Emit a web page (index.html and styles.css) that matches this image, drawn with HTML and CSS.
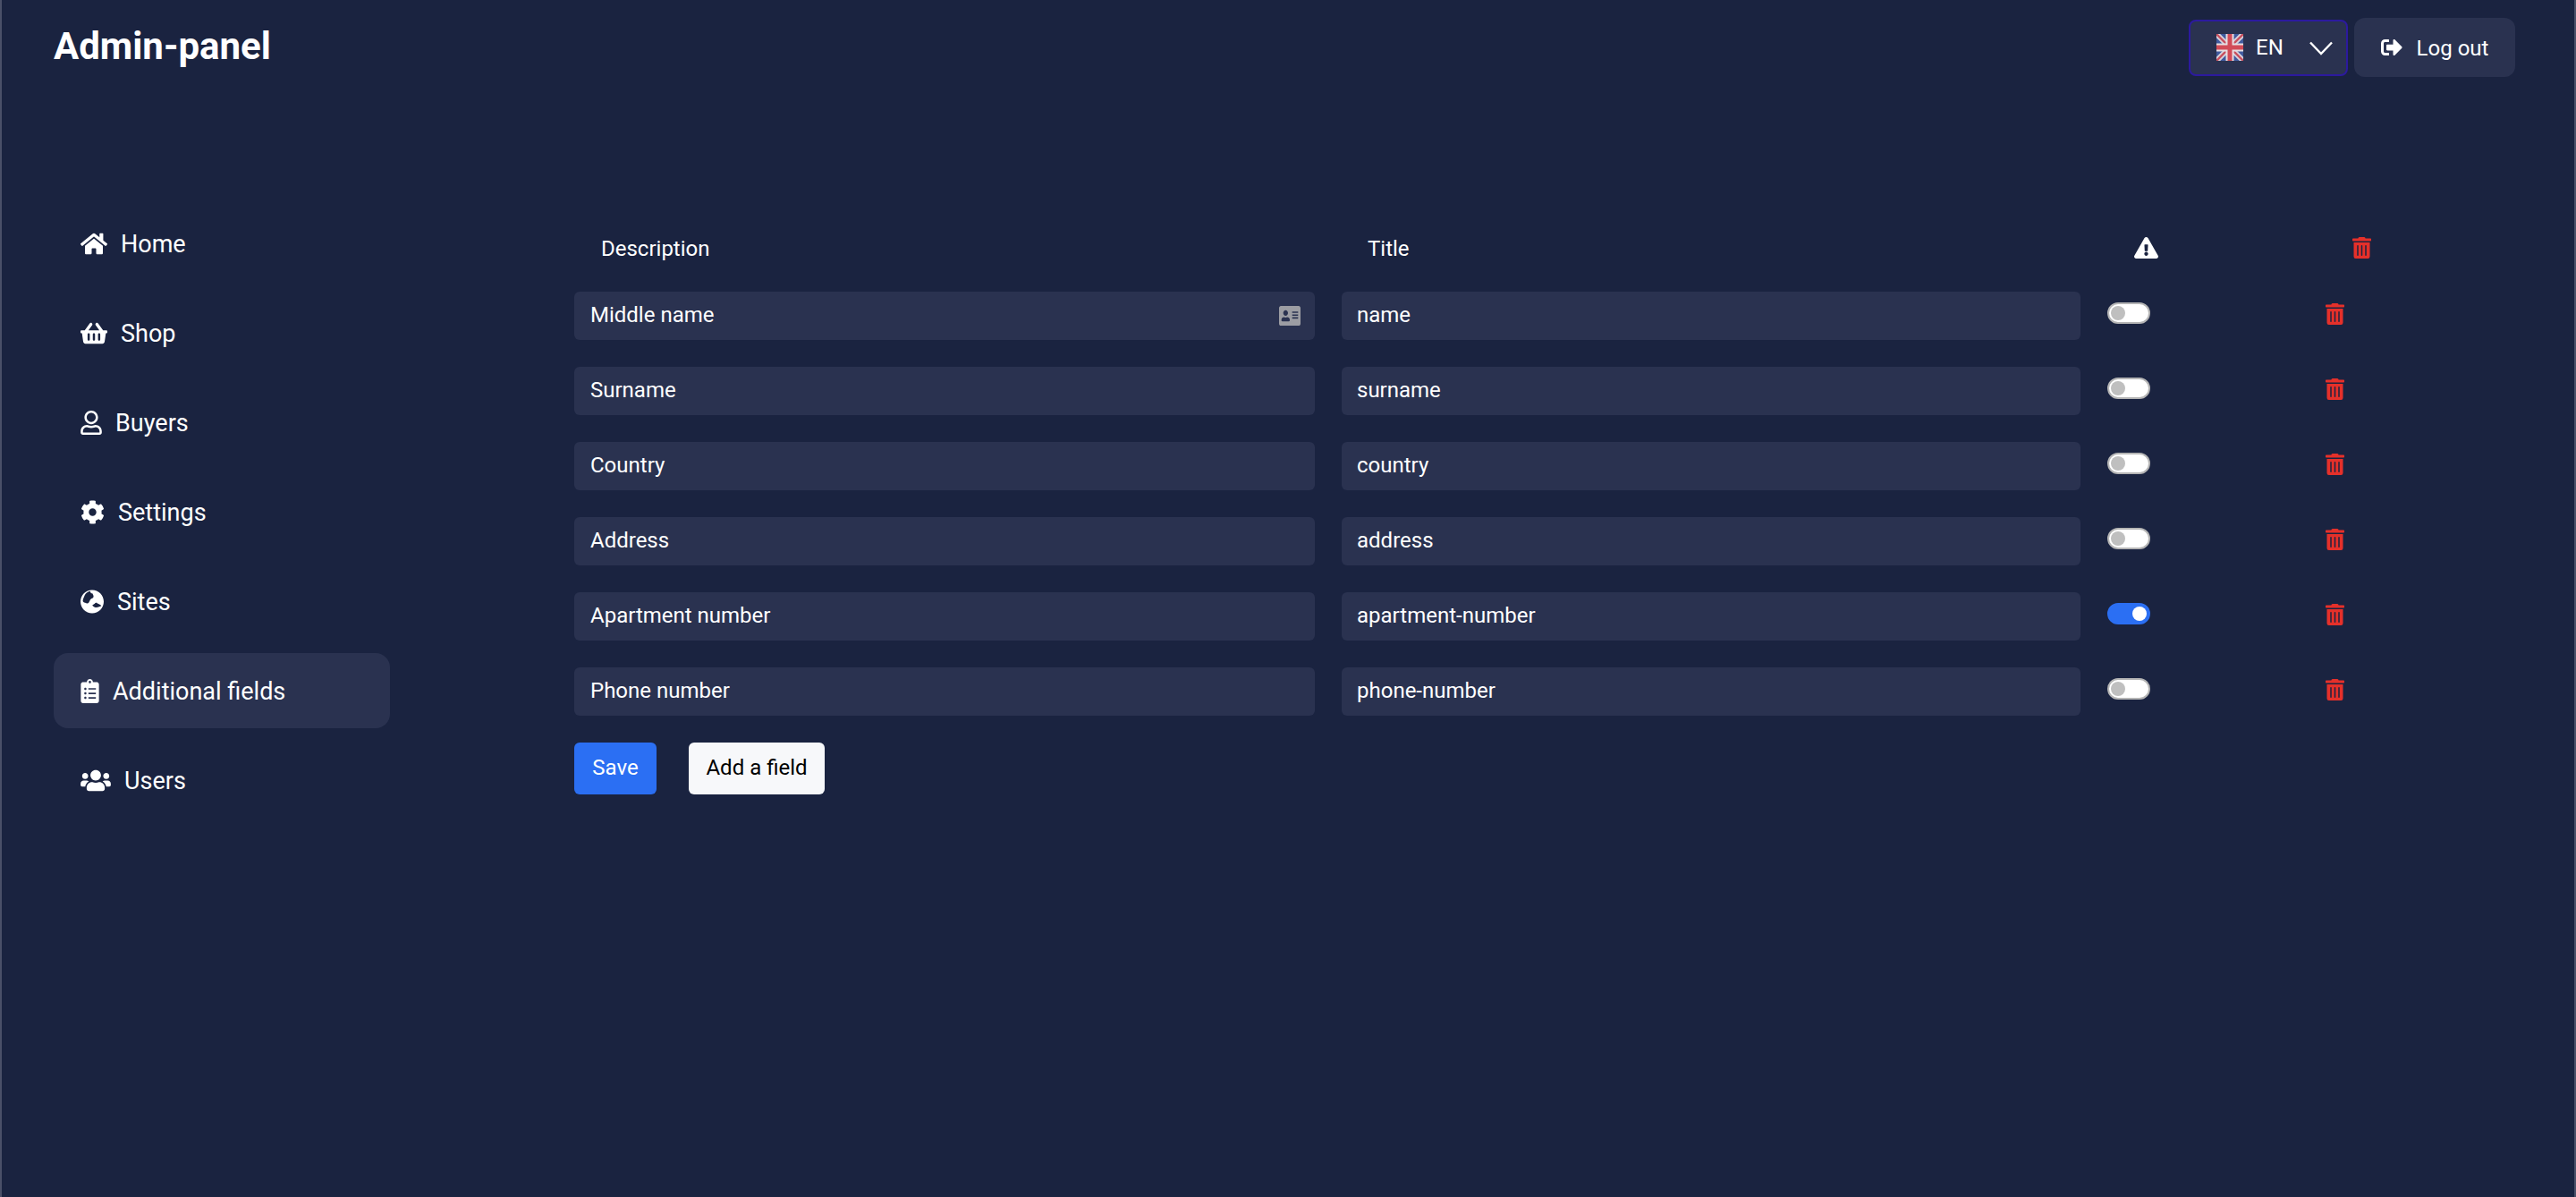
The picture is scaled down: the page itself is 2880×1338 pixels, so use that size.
FILE: index.html
```html
<!DOCTYPE html>
<html lang="en">
<head>
<meta charset="utf-8">
<title>Admin-panel</title>
<link rel="stylesheet" href="styles.css">
</head>
<body>
<svg class="sprites" xmlns="http://www.w3.org/2000/svg">
  <symbol id="i-home" viewBox="0 0 576 512"><path d="M280.37 148.26L96 300.11V464a16 16 0 0 0 16 16l112.06-.29a16 16 0 0 0 15.92-16V368a16 16 0 0 1 16-16h64a16 16 0 0 1 16 16v95.64a16 16 0 0 0 16 16.05L464 480a16 16 0 0 0 16-16V300L295.67 148.26a12.19 12.19 0 0 0-15.3 0zM571.6 251.47L488 182.56V44.05a12 12 0 0 0-12-12h-56a12 12 0 0 0-12 12v72.61L318.47 43a48 48 0 0 0-61 0L4.34 251.47a12 12 0 0 0-1.6 16.9l25.5 31A12 12 0 0 0 45.15 301l235.22-193.74a12.19 12.19 0 0 1 15.3 0L530.9 301a12 12 0 0 0 16.9-1.6l25.5-31a12 12 0 0 0-1.7-16.93z"/></symbol>
  <symbol id="i-basket" viewBox="0 0 576 512"><path d="M576 216v16c0 13.255-10.745 24-24 24h-8l-26.113 182.788C514.509 462.435 494.257 480 470.37 480H105.63c-23.887 0-44.139-17.565-47.518-41.212L32 256h-8c-13.255 0-24-10.745-24-24v-16c0-13.255 10.745-24 24-24h67.341l106.78-146.821c10.395-14.292 30.407-17.453 44.701-7.058 14.293 10.395 17.453 30.408 7.058 44.701L170.477 192h235.046L326.12 82.821c-10.395-14.292-7.234-34.306 7.059-44.701 14.291-10.395 34.306-7.235 44.701 7.058L484.659 192H552c13.255 0 24 10.745 24 24zM312 392V280c0-13.255-10.745-24-24-24s-24 10.745-24 24v112c0 13.255 10.745 24 24 24s24-10.745 24-24zm112 0V280c0-13.255-10.745-24-24-24s-24 10.745-24 24v112c0 13.255 10.745 24 24 24s24-10.745 24-24zm-224 0V280c0-13.255-10.745-24-24-24s-24 10.745-24 24v112c0 13.255 10.745 24 24 24s24-10.745 24-24z"/></symbol>
  <symbol id="i-user" viewBox="0 0 448 512"><path d="M313.6 304c-28.7 0-42.5 16-89.6 16-47.1 0-60.8-16-89.6-16C60.2 304 0 364.2 0 438.4V464c0 26.5 21.5 48 48 48h352c26.5 0 48-21.5 48-48v-25.6c0-74.2-60.2-134.4-134.4-134.4zM400 464H48v-25.6c0-47.6 38.8-86.4 86.4-86.4 14.6 0 38.3 16 89.6 16 51.7 0 74.9-16 89.6-16 47.6 0 86.4 38.8 86.4 86.4V464zM224 288c79.5 0 144-64.5 144-144S303.5 0 224 0 80 64.5 80 144s64.5 144 144 144zm0-240c52.9 0 96 43.1 96 96s-43.1 96-96 96-96-43.1-96-96 43.1-96 96-96z"/></symbol>
  <symbol id="i-cog" viewBox="0 0 512 512"><path d="M487.4 315.7l-42.6-24.6c4.3-23.2 4.3-47 0-70.2l42.6-24.6c4.9-2.8 7.1-8.6 5.5-14-11.1-35.6-30-67.8-54.7-94.6-3.8-4.1-10-5.1-14.8-2.3L380.8 110c-17.9-15.4-38.5-27.3-60.8-35.1V25.8c0-5.6-3.9-10.5-9.4-11.7-36.7-8.2-74.3-7.8-109.2 0-5.5 1.2-9.4 6.1-9.4 11.7V75c-22.2 7.9-42.8 19.8-60.8 35.1L88.7 85.5c-4.9-2.8-11-1.9-14.8 2.3-24.7 26.7-43.6 58.9-54.7 94.6-1.7 5.4.6 11.2 5.5 14L67.3 221c-4.3 23.2-4.3 47 0 70.2l-42.6 24.6c-4.9 2.8-7.1 8.6-5.5 14 11.1 35.6 30 67.8 54.7 94.6 3.8 4.1 10 5.1 14.8 2.3l42.6-24.6c17.9 15.4 38.5 27.3 60.8 35.1v49.2c0 5.6 3.9 10.5 9.4 11.7 36.7 8.2 74.3 7.8 109.2 0 5.5-1.2 9.4-6.1 9.4-11.7v-49.2c22.2-7.9 42.8-19.8 60.8-35.1l42.6 24.6c4.9 2.8 11 1.9 14.8-2.3 24.7-26.7 43.6-58.9 54.7-94.6 1.5-5.5-.7-11.3-5.6-14.1zM256 336c-44.1 0-80-35.9-80-80s35.9-80 80-80 80 35.9 80 80-35.9 80-80 80z"/></symbol>
  <symbol id="i-globe" viewBox="0 0 496 512"><path fill-rule="evenodd" d="M248 8C111 8 0 119 0 256s111 248 248 248 248-111 248-248S385 8 248 8zM203 30c-50 14-94 44-112 86-18 40-44 90-41 132 14 30 36 34 50 32 16 8 44 20 60 10 24-12 30-44 42-64 8-20 24-24 34-36 22-8 44-20 42-50-2-24-16-42-25-60-16 4-34-2-50-50zM254 332c6 20 30 34 48 42 30 12 64 6 96-6 16-6 34-14 47-22-12-20-36-36-62-44-10-8-34-8-33-22-20-4-42 6-50 22-14 8-34 14-46 30z"/></symbol>
  <symbol id="i-clipboard" viewBox="0 0 384 512"><path d="M336 64h-80c0-35.3-28.7-64-64-64s-64 28.7-64 64H48C21.5 64 0 85.5 0 112v352c0 26.5 21.5 48 48 48h288c26.5 0 48-21.5 48-48V112c0-26.5-21.5-48-48-48zM96 424c-13.3 0-24-10.7-24-24s10.7-24 24-24 24 10.7 24 24-10.7 24-24 24zm0-96c-13.3 0-24-10.7-24-24s10.7-24 24-24 24 10.7 24 24-10.7 24-24 24zm0-96c-13.3 0-24-10.7-24-24s10.7-24 24-24 24 10.7 24 24-10.7 24-24 24zm96-192c13.3 0 24 10.7 24 24s-10.7 24-24 24-24-10.7-24-24 10.7-24 24-24zm128 368c0 4.4-3.6 8-8 8H168c-4.4 0-8-3.6-8-8v-16c0-4.4 3.6-8 8-8h144c4.4 0 8 3.6 8 8v16zm0-96c0 4.4-3.6 8-8 8H168c-4.4 0-8-3.6-8-8v-16c0-4.4 3.6-8 8-8h144c4.4 0 8 3.6 8 8v16zm0-96c0 4.4-3.6 8-8 8H168c-4.4 0-8-3.6-8-8v-16c0-4.4 3.6-8 8-8h144c4.4 0 8 3.6 8 8v16z"/></symbol>
  <symbol id="i-users" viewBox="0 0 640 512"><path d="M96 224c35.3 0 64-28.7 64-64s-28.7-64-64-64-64 28.7-64 64 28.7 64 64 64zm448 0c35.3 0 64-28.7 64-64s-28.7-64-64-64-64 28.7-64 64 28.7 64 64 64zm32 32h-64c-17.6 0-33.5 7.1-45.1 18.6 40.3 22.1 68.9 62 75.1 109.4h66c17.7 0 32-14.3 32-32v-32c0-35.3-28.7-64-64-64zm-256 0c61.9 0 112-50.1 112-112S381.9 32 320 32 208 82.1 208 144s50.1 112 112 112zm76.8 32h-8.3c-20.8 10-43.9 16-68.5 16s-47.6-6-68.5-16h-8.3C179.6 288 128 339.6 128 403.2V432c0 26.5 21.5 48 48 48h288c26.5 0 48-21.5 48-48v-28.8c0-63.6-51.6-115.2-115.2-115.2zm-223.7-13.4C161.5 263.1 145.6 256 128 256H64c-35.3 0-64 28.7-64 64v32c0 17.7 14.3 32 32 32h65.9c6.3-47.4 34.9-87.3 75.2-109.4z"/></symbol>
  <symbol id="i-signout" viewBox="0 0 512 512"><path d="M497 273L329 441c-15 15-41 4.5-41-17v-96H152c-13.3 0-24-10.7-24-24v-96c0-13.3 10.7-24 24-24h136V88c0-21.4 25.9-32 41-17l168 168c9.3 9.4 9.3 24.6 0 34zM192 436v-40c0-6.6-5.4-12-12-12H96c-17.7 0-32-14.3-32-32V160c0-17.7 14.3-32 32-32h84c6.6 0 12-5.4 12-12V76c0-6.6-5.4-12-12-12H96c-53 0-96 43-96 96v192c0 53 43 96 96 96h84c6.6 0 12-5.4 12-12z"/></symbol>
  <symbol id="i-trash" viewBox="0 0 448 512"><path d="M32 464a48 48 0 0 0 48 48h288a48 48 0 0 0 48-48V128H32zm272-256a16 16 0 0 1 32 0v224a16 16 0 0 1-32 0zm-96 0a16 16 0 0 1 32 0v224a16 16 0 0 1-32 0zm-96 0a16 16 0 0 1 32 0v224a16 16 0 0 1-32 0zM432 32H312l-9.4-18.7A24 24 0 0 0 281.1 0H166.8a23.72 23.72 0 0 0-21.4 13.3L136 32H16A16 16 0 0 0 0 48v32a16 16 0 0 0 16 16h416a16 16 0 0 0 16-16V48a16 16 0 0 0-16-16z"/></symbol>
  <symbol id="i-warn" viewBox="0 0 576 512"><path d="M569.517 440.013C587.975 472.007 564.806 512 527.94 512H48.054c-36.937 0-59.999-40.055-41.577-71.987L246.423 23.985c18.467-32.009 64.72-31.951 83.154 0l239.94 416.028zM288 354c-25.405 0-46 20.595-46 46s20.595 46 46 46 46-20.595 46-46-20.595-46-46-46zm-43.673-165.346l7.418 136c.347 6.364 5.609 11.346 11.982 11.346h48.546c6.373 0 11.635-4.982 11.982-11.346l7.418-136c.375-6.874-5.098-12.654-11.982-12.654h-63.383c-6.884 0-12.356 5.78-11.981 12.654z"/></symbol>
  <symbol id="i-card" viewBox="0 32 576 448" preserveAspectRatio="none"><path d="M528 32H48C21.5 32 0 53.5 0 80v352c0 26.5 21.5 48 48 48h480c26.5 0 48-21.5 48-48V80c0-26.5-21.5-48-48-48zm-352 96c35.3 0 64 28.7 64 64s-28.7 64-64 64-64-28.7-64-64 28.7-64 64-64zm112 236.8c0 10.6-10 19.2-22.4 19.2H86.4C74 384 64 375.4 64 364.8v-19.2c0-31.8 30.1-57.6 67.2-57.6h5c12.3 5.1 25.7 8 39.8 8s27.6-2.9 39.8-8h5c37.1 0 67.2 25.8 67.2 57.6v19.2zM512 312c0 4.4-3.6 8-8 8H360c-4.4 0-8-3.6-8-8v-16c0-4.4 3.6-8 8-8h144c4.4 0 8 3.6 8 8v16zm0-64c0 4.4-3.6 8-8 8H360c-4.4 0-8-3.6-8-8v-16c0-4.4 3.6-8 8-8h144c4.4 0 8 3.6 8 8v16zm0-64c0 4.4-3.6 8-8 8H360c-4.4 0-8-3.6-8-8v-16c0-4.4 3.6-8 8-8h144c4.4 0 8 3.6 8 8v16z"/></symbol>
</svg>

<header class="topbar">
  <h1 class="brand">Admin-panel</h1>
  <div class="top-actions">
    <div class="lang">
      <svg class="flag" viewBox="0 0 30 30" xmlns="http://www.w3.org/2000/svg">
        <g class="flag-art">
          <rect x="-3" y="-3" width="36" height="36" fill="#3f5a9e"/>
          <path d="M-3 -3L33 33M33 -3L-3 33" stroke="#d9d4dc" stroke-width="6"/>
          <path d="M-3 -3L33 33M33 -3L-3 33" stroke="#c8505f" stroke-width="2.4"/>
          <path d="M15 -3V33M-3 15H33" stroke="#e6dfe2" stroke-width="9"/>
          <path d="M15 -3V33M-3 15H33" stroke="#d24c58" stroke-width="5"/>
        </g>
      </svg>
      <span class="lang-code">EN</span>
      <svg class="chevron" viewBox="0 0 26 16" xmlns="http://www.w3.org/2000/svg"><path d="M1 1.5L13 14L25 1.5" fill="none" stroke="#fff" stroke-width="2.4"/></svg>
    </div>
    <button class="logout"><svg class="ico ico-logout"><use href="#i-signout"/></svg><span class="logout-label">Log out</span></button>
  </div>
</header>

<div class="layout">
  <nav class="side">
    <a class="side-item"><svg class="ico w-home"><use href="#i-home"/></svg><span>Home</span></a>
    <a class="side-item"><svg class="ico w-home"><use href="#i-basket"/></svg><span>Shop</span></a>
    <a class="side-item"><svg class="ico w-user"><use href="#i-user"/></svg><span>Buyers</span></a>
    <a class="side-item"><svg class="ico w-cog"><use href="#i-cog"/></svg><span>Settings</span></a>
    <a class="side-item"><svg class="ico w-globe"><use href="#i-globe"/></svg><span>Sites</span></a>
    <a class="side-item is-active"><svg class="ico w-clip"><use href="#i-clipboard"/></svg><span>Additional fields</span></a>
    <a class="side-item"><svg class="ico w-users"><use href="#i-users"/></svg><span>Users</span></a>
  </nav>

  <main class="content">
    <div class="grid head">
      <div class="head-cell"><span class="head-label">Description</span></div>
      <div class="head-cell"><span class="head-label">Title</span></div>
      <div class="head-cell"><svg class="warn"><use href="#i-warn"/></svg></div>
      <div class="head-cell"><svg class="trash"><use href="#i-trash"/></svg></div>
    </div>
    <div class="rows">
      <div class="grid">
        <div class="field"><span>Middle name</span><svg class="card"><use href="#i-card"/></svg></div>
        <div class="field field-title"><span>name</span></div>
        <div class="cell"><span class="toggle"></span></div>
        <div class="cell cell-trash"><svg class="trash"><use href="#i-trash"/></svg></div>
      </div>
      <div class="grid">
        <div class="field"><span>Surname</span></div>
        <div class="field field-title"><span>surname</span></div>
        <div class="cell"><span class="toggle"></span></div>
        <div class="cell cell-trash"><svg class="trash"><use href="#i-trash"/></svg></div>
      </div>
      <div class="grid">
        <div class="field"><span>Country</span></div>
        <div class="field field-title"><span>country</span></div>
        <div class="cell"><span class="toggle"></span></div>
        <div class="cell cell-trash"><svg class="trash"><use href="#i-trash"/></svg></div>
      </div>
      <div class="grid">
        <div class="field"><span>Address</span></div>
        <div class="field field-title"><span>address</span></div>
        <div class="cell"><span class="toggle"></span></div>
        <div class="cell cell-trash"><svg class="trash"><use href="#i-trash"/></svg></div>
      </div>
      <div class="grid">
        <div class="field"><span>Apartment number</span></div>
        <div class="field field-title"><span>apartment-number</span></div>
        <div class="cell"><span class="toggle is-on"></span></div>
        <div class="cell cell-trash"><svg class="trash"><use href="#i-trash"/></svg></div>
      </div>
      <div class="grid">
        <div class="field"><span>Phone number</span></div>
        <div class="field field-title"><span>phone-number</span></div>
        <div class="cell"><span class="toggle"></span></div>
        <div class="cell cell-trash"><svg class="trash"><use href="#i-trash"/></svg></div>
      </div>
      <div class="actions">
        <button class="btn btn-save">Save</button>
        <button class="btn btn-add">Add a field</button>
      </div>
    </div>
  </main>
</div>
</body>
</html>
```

FILE: styles.css
```css
* { box-sizing: border-box; }
html, body { margin: 0; height: 100%; }
body {
  background: #1a2340;
  border-left: 2px solid #4a5068;
  border-right: 2px solid #4a5068;
  color: #fff;
  font-family: Roboto, "Liberation Sans", sans-serif;
  overflow: hidden;
}
.sprites { display: none; }
svg { fill: currentColor; flex: none; display: block; }

.topbar {
  height: 130px;
  padding: 20px 66px 0 58px;
  display: flex;
  justify-content: space-between;
  align-items: flex-start;
}
.brand {
  margin: 10px 0 0;
  font-size: 42px;
  line-height: 44px;
  font-weight: 700;
}
.top-actions { display: flex; align-items: center; gap: 7px; }
.lang {
  width: 178px;
  height: 63px;
  border: 2px solid #2c1a9e;
  border-radius: 8px;
  background: #2a3250;
  display: flex;
  align-items: center;
  padding-left: 29px;
  font-size: 24px;
}
.flag { width: 30px; height: 30px; }
.flag-art { filter: blur(.7px); }
.lang-code { margin-left: 14px; }
.chevron { width: 26px; height: 16px; margin: 2px 15px 0 auto; }
.logout {
  width: 180px;
  height: 66px;
  border: 0;
  border-radius: 12px;
  background: #2a3250;
  color: #fff;
  font: 400 24px Roboto, sans-serif;
  display: flex;
  align-items: center;
  justify-content: center;
  gap: 16px;
  padding: 0;
}
.logout-label { padding-top: 1px; }

.layout { display: flex; align-items: flex-start; padding-top: 100px; }
.side { width: 376px; margin-left: 58px; display: flex; flex-direction: column; gap: 16px; }
.side-item {
  height: 84px;
  padding: 0 30px;
  border-radius: 16px;
  display: flex;
  align-items: center;
  gap: 15px;
  font-size: 27px;
}
.side-item span { padding-top: 1px; }
.is-active { background: #2a3250; }
.ico { height: 27px; }
.w-home { width: 30px; }
.w-user { width: 24px; }
.w-cog { width: 27px; }
.w-globe { width: 26px; }
.w-clip { width: 21px; }
.w-users { width: 34px; }
.logout .ico { width: 24px; height: 24px; }

.content { margin-left: 206px; margin-top: 20px; }
.grid {
  display: grid;
  grid-template-columns: 828px 826px 214px 24px;
  column-gap: 30px;
}
.head { height: 54px; font-size: 24px; align-items: center; }
.head-cell { padding-left: 30px; }
.head-label { display: block; padding-top: 1px; }
.head-cell:nth-child(2) .head-label { margin-left: -1px; }
.rows { margin-top: 22px; display: flex; flex-direction: column; gap: 30px; }
.field {
  height: 54px;
  padding: 0 18px 2px;
  border-radius: 6px;
  background: #2a3250;
  display: flex;
  align-items: center;
  justify-content: space-between;
  font-size: 24px;
}
.field-title { padding-left: 17px; }
.card { width: 24px; height: 22px; color: #9c9da3; margin-right: -2px; margin-top: 2px; }
.cell { padding-top: 12px; }
.cell-trash { padding-top: 13px; }
.warn { width: 27px; height: 24px; }
.trash { width: 21px; height: 24px; color: #e5302a; }
.toggle {
  display: block;
  position: relative;
  width: 48px;
  height: 24px;
  border-radius: 12px;
  background: #fff;
  border: 2px solid #b5b5b5;
}
.toggle::after {
  content: "";
  position: absolute;
  left: 2px;
  top: 2px;
  width: 16px;
  height: 16px;
  border-radius: 50%;
  background: #bfbfbf;
}
.toggle.is-on { background: #2b6ff3; border-color: #2b6ff3; }
.toggle.is-on::after { left: 26px; background: #fff; }

.actions { display: flex; gap: 36px; }
.btn {
  height: 58px;
  border: 0;
  border-radius: 6px;
  font: 400 24px Roboto, sans-serif;
  padding: 0 0 2px;
}
.btn-save { width: 92px; background: #2b6ff3; color: #fff; }
.btn-add { width: 152px; background: #f7f8fa; color: #000; }
```
